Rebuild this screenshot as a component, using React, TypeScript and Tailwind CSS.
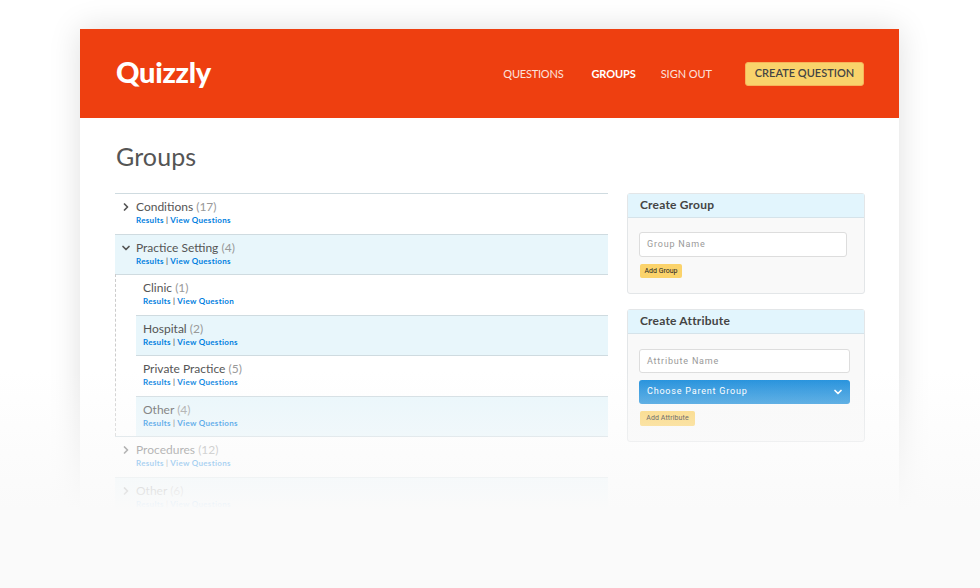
import React from 'react';
import { ChevronDown, ChevronRight } from 'lucide-react';

type RowProps = {
  name: string;
  count: number;
  link: string;
  shaded?: boolean;
  child?: boolean;
  open?: boolean;
};

function Row({ name, count, link, shaded, child, open }: RowProps) {
  return (
    <div className={`h-[40.5px] border-t border-[#cfdbe0] flex ${shaded ? 'bg-[#e8f6fb]' : 'bg-white'} ${child ? 'pl-[7px]' : ''}`}>
      {!child && (
        <div className="w-[21px] shrink-0 flex justify-center pt-[7px] pl-[1px]">
          {open ? (
            <ChevronDown size={12} strokeWidth={3.5} className="text-[#555]" />
          ) : (
            <ChevronRight size={12} strokeWidth={3.5} className="text-[#555]" />
          )}
        </div>
      )}
      <div className="pt-[5px]">
        <div className="text-[12px] leading-[16px] text-[#555]">
          {name} <span className="text-[#999]">({count})</span>
        </div>
        <div className="text-[8px] leading-[11px] font-bold text-[#0080e0] tracking-[0.3px]">
          Results <span className="text-[#333] font-normal">|</span> {link}
        </div>
      </div>
    </div>
  );
}

function Panel({ title, children }: { title: string; children: React.ReactNode }) {
  return (
    <div className="border border-[#e3e6e8] rounded-[3px] bg-[#f9f9f9]">
      <div className="h-[24px] bg-[#e2f5fd] border-b border-[#d5e3ea] pl-[12px] text-[12px] leading-[22px] font-bold text-[#444] tracking-[0.2px]">
        {title}
      </div>
      {children}
    </div>
  );
}

export default function App() {
  return (
    <div className="relative w-[980px] h-[588px] overflow-hidden bg-white font-['Lato',sans-serif]">
      <div className="ml-[80px] mt-[29px] w-[819px] h-[520px] bg-white shadow-[0_0_30px_rgba(0,0,0,0.13)]">
        {/* header */}
        <div className="h-[89px] bg-[#ee3f10] flex items-start justify-between pl-[36px] pr-[35px]">
          <div className="mt-[25px] text-[29px] leading-[36px] font-black text-white tracking-[-0.3px]">Quizzly</div>
          <div className="flex items-center mt-[33px] text-[11px] leading-[24px] text-white">
            <span className="opacity-85 tracking-[-0.2px]">QUESTIONS</span>
            <span className="ml-[28px] font-bold tracking-[-0.1px]">GROUPS</span>
            <span className="ml-[25px] opacity-85 tracking-[-0.05px]">SIGN OUT</span>
            <span className="ml-[33px] w-[119px] h-[24px] rounded-[3px] bg-[#f9d36b] border border-[#f7b35a] text-center text-[#444] font-semibold leading-[20px]">
              CREATE QUESTION
            </span>
          </div>
        </div>

        <div className="pl-[36px] pr-[34px]">
          <h1 className="mt-[20px] text-[25px] leading-[36px] text-[#555] tracking-[0.1px]">Groups</h1>

          <div className="mt-[19px] flex items-start">
            {/* tree */}
            <div className="w-[493px] -ml-px border-b border-[#e3eaed]">
              <Row name="Conditions" count={17} link="View Questions" />
              <Row name="Practice Setting" count={4} link="View Questions" shaded open />
              <div className="border-t border-[#cfdbe0]">
                <div className="-mt-px border-l border-dashed border-[#ccc] pl-[20px]">
                  <Row name="Clinic" count={1} link="View Question" child />
                  <Row name="Hospital" count={2} link="View Questions" shaded child />
                  <Row name="Private Practice" count={5} link="View Questions" child />
                  <Row name="Other" count={4} link="View Questions" shaded child />
                </div>
              </div>
              <Row name="Procedures" count={12} link="View Questions" />
              <Row name="Other" count={6} link="View Questions" shaded />
            </div>

            {/* sidebar */}
            <div className="ml-[19px] w-[238px] flex flex-col gap-[15px]">
              <Panel title="Create Group">
                <div className="h-[75px] px-[11px] pt-[14px]">
                  <div className="w-[208px] h-[25px] bg-white border border-[#ddd] rounded-[3px] pl-[7px] font-['Roboto',sans-serif] text-[9px] leading-[22px] text-[#999] tracking-[0.8px]">
                    Group Name
                  </div>
                  <div className="mt-[7px] ml-px w-[42px] h-[14px] rounded-[2px] bg-[#fbd36b] text-center font-['Roboto',sans-serif] text-[7px] leading-[14px] text-[#222]">
                    Add Group
                  </div>
                </div>
              </Panel>
              <Panel title="Create Attribute">
                <div className="h-[107px] px-[11px] pt-[15px]">
                  <div className="w-[211px] h-[24px] bg-white border border-[#ddd] rounded-[3px] pl-[7px] font-['Roboto',sans-serif] text-[9px] leading-[22px] text-[#999] tracking-[0.8px]">
                    Attribute Name
                  </div>
                  <div className="mt-[7px] w-[211px] h-[24px] rounded-[3px] bg-gradient-to-b from-[#1a8cdb] to-[#2f98dd] flex items-center justify-between pl-[8px] pr-[6px] font-['Roboto',sans-serif] text-[9px] text-white tracking-[0.8px]">
                    Choose Parent Group
                    <ChevronDown size={12} strokeWidth={3.5} />
                  </div>
                  <div className="mt-[7px] ml-px w-[55px] h-[15px] rounded-[2px] bg-[#fbd36b] text-center font-['Roboto',sans-serif] text-[7px] leading-[15px] text-[#222] tracking-[0.1px]">
                    Add Attribute
                  </div>
                </div>
              </Panel>
            </div>
          </div>
        </div>
      </div>

      {/* fade-out over the lower part of the page */}
      <div className="absolute left-0 right-0 top-[370px] h-[140px] bg-gradient-to-b from-[#fafafa00] to-[#fafafa]" />
      <div className="absolute left-0 right-0 top-[510px] bottom-0 bg-[#fafafa]" />
    </div>
  );
}
